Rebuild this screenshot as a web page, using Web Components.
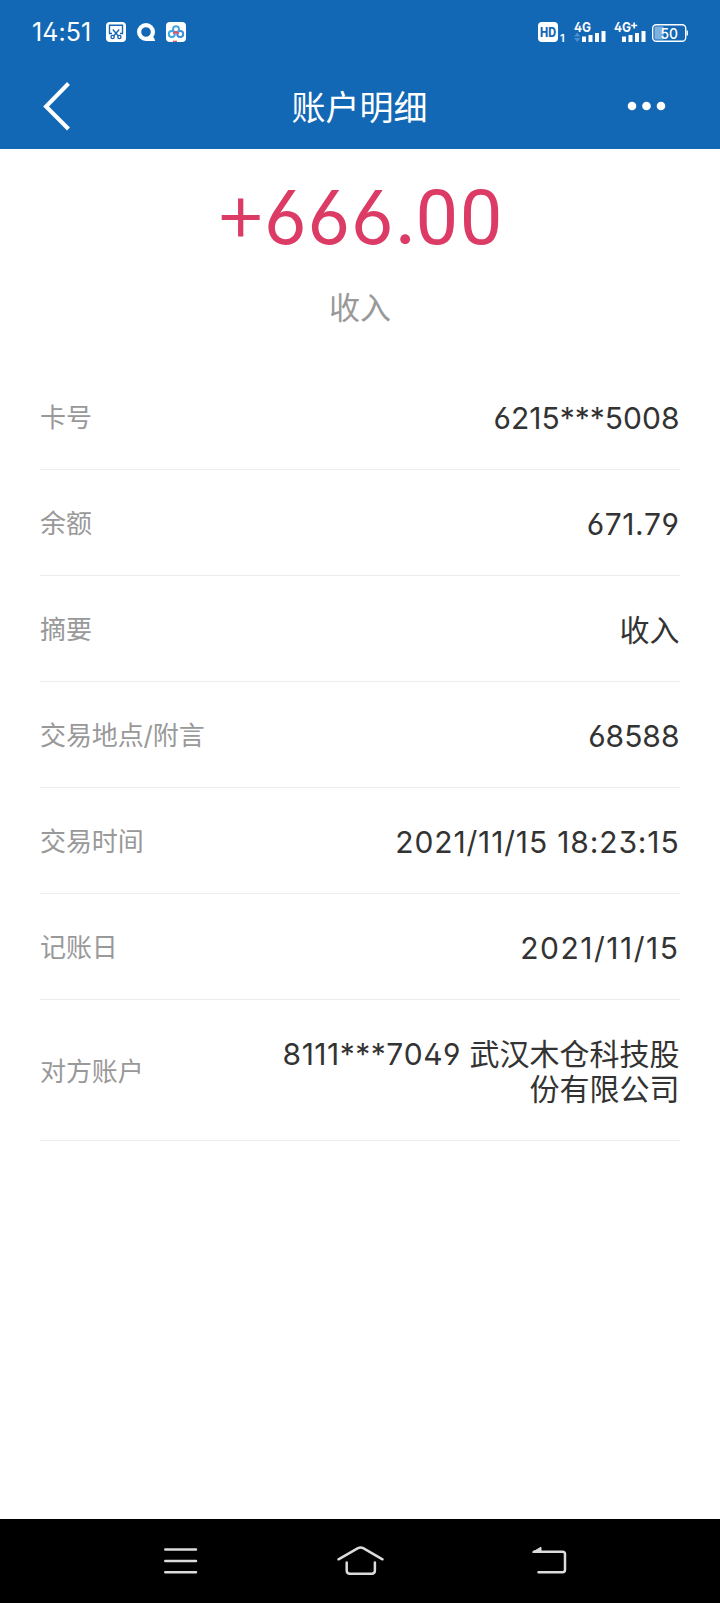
<!DOCTYPE html>
<html lang="zh-CN">
<head>
<meta charset="UTF-8">
<meta name="viewport" content="width=device-width, initial-scale=1">
<title>账户明细</title>
<style>
    html, body {
        margin: 0;
        background: #fff;
    }
    body {
        font-family: Inter, "Noto Sans CJK SC", sans-serif;
        font-feature-settings: "ss01";
    }
</style>
</head>
<body>
<account-page></account-page>

<script>
class StatusBar extends HTMLElement {
    constructor() {
        super();
        this.attachShadow({ mode: 'open' });
    }

    static get styles() {
        return /*css*/`
        :host{
            display:flex;
            justify-content:space-between;
            box-sizing:border-box;
            height:63px;
            padding:20px 32px 0 32px;
            color:#fff;
        }
        .left, .right{
            display:flex;
            align-items:flex-start;
        }
        .time{
            width:74px;
            font-size:25px;
            line-height:25px;
            letter-spacing:0.100px;
            white-space:nowrap;
        }
        svg{
            display:block;
        }
        text{
            font-family:Inter, sans-serif;
            fill:#fff;
        }
    `;
    }

    connectedCallback() {
        this.render();
    }

    render() {
        this.shadowRoot.innerHTML =/*html*/`
        <style>${StatusBar.styles}</style>
        <div class="left">
            <span class="time">14:51</span>
            <svg width="82" height="24" viewBox="106 20 82 24">
                <rect x="106" y="22" width="20" height="20" rx="4" fill="#fff"/>
                <g fill="none" stroke="#1568b4" stroke-width="1.4">
                    <path d="M112 33.500h-2.500v-8.300h13v8.300h-2.500"/>
                    <path d="M112.800 29.500l5.600 6.500M119.200 29.500l-5.600 6.500"/>
                    <circle cx="112.600" cy="37" r="1.600"/>
                    <circle cx="119.400" cy="37" r="1.600"/>
                </g>
                <circle cx="146" cy="32" r="6.900" fill="none" stroke="#fff" stroke-width="4.200"/>
                <path d="M146 41q1-5 4.500-5.500q3-.2 4.700 5.500z" fill="#fff"/>
                <rect x="166" y="22" width="20" height="20" rx="4" fill="#fff"/>
                <g fill="none" stroke-width="2">
                    <circle cx="171.800" cy="34" r="3" stroke="#3fa9e0"/>
                    <circle cx="180.200" cy="34" r="3" stroke="#3a8fd8"/>
                    <circle cx="176" cy="29.300" r="3" stroke="#49a5e2"/>
                    <path d="M173.500 34q2.500 -4 5 0" stroke="#e5516a"/>
                </g>
                <path d="M173 40.700h4v1.300h-4z" fill="#e5516a"/>
            </svg>
        </div>
        <div class="right">
            <svg width="150" height="24" viewBox="538 20 150 24">
                <rect x="538" y="22" width="20" height="20" rx="4" fill="#fff"/>
                <text x="540" y="36.700" font-size="12.500" font-weight="800" textLength="16" lengthAdjust="spacingAndGlyphs" style="fill:#1568b4">HD</text>
                <text x="560" y="42" font-size="11" font-weight="600">1</text>
                <text x="574" y="32" font-size="13" font-weight="700" textLength="17" lengthAdjust="spacingAndGlyphs">4G</text>
                <path d="M574 36.500l3.200-4 3.200 4zM574 38l3.200 4 3.200-4z" fill="#4a90cf"/>
                <path d="M582 36.500h4V42h-4zM588.500 35h4v7h-4zM595 33h4v9h-4zM601.500 31h4v11h-4z" fill="#fff"/>
                <text x="614" y="32" font-size="13" font-weight="700" textLength="17" lengthAdjust="spacingAndGlyphs">4G</text>
                <path d="M634.200 22.500v6M631.200 25.500h6" stroke="#fff" stroke-width="1.700"/>
                <path d="M622 36.500h4V42h-4zM628.500 35h4v7h-4zM635 33h4v9h-4zM641.500 31h4v11h-4z" fill="#fff"/>
                <rect x="654.500" y="26.500" width="9" height="13" fill="#7fb1de"/>
                <rect x="652.700" y="24.700" width="33" height="16.600" rx="3.500" fill="none" stroke="#fff" stroke-width="1.400"/>
                <path d="M686.500 30.500h1.400v5h-1.400z" fill="#fff"/>
                <text x="660.500" y="38.500" font-size="15" font-weight="500" textLength="17.500" lengthAdjust="spacingAndGlyphs">50</text>
            </svg>
        </div>
    `;
    }
}
customElements.define('status-bar', StatusBar);

class TitleBar extends HTMLElement {
    constructor() {
        super();
        this.attachShadow({ mode: 'open' });
    }

    static get styles() {
        return /*css*/`
        :host{
            display:grid;
            grid-template-columns:1fr auto 1fr;
            align-items:center;
            height:85.500px;
            padding:0 54px 0 42px;
            color:#fff;
        }
        h1{
            margin:4px 0 0 11px;
            font-size:34px;
            font-weight:400;
            line-height:40px;
        }
        svg{
            display:block;
        }
        .more{
            justify-self:end;
        }
    `;
    }

    connectedCallback() {
        this.render();
    }

    render() {
        this.shadowRoot.innerHTML =/*html*/`
        <style>${TitleBar.styles}</style>
        <svg width="30" height="50" viewBox="0 0 30 50">
            <path d="M26.500 2.500L4 25.500 26.500 48" fill="none" stroke="#fff" stroke-width="4"/>
        </svg>
        <h1><slot></slot></h1>
        <svg class="more" width="40" height="10" viewBox="0 0 40 10">
            <g fill="#fff">
                <circle cx="6" cy="5" r="4.300"/>
                <circle cx="20.500" cy="5" r="4.300"/>
                <circle cx="35" cy="5" r="4.300"/>
            </g>
        </svg>
    `;
    }
}
customElements.define('title-bar', TitleBar);

class AmountSummary extends HTMLElement {
    constructor() {
        super();
        this.attachShadow({ mode: 'open' });
    }

    static get styles() {
        return /*css*/`
        :host{
            display:flex;
            flex-direction:column;
            align-items:center;
            box-sizing:border-box;
            height:215px;
            padding-top:28px;
        }
        .amount{
            height:80px;
            margin-right:3px;
            color:#dc3b66;
            font-size:74px;
            line-height:80px;
            letter-spacing:0.500px;
            white-space:nowrap;
            font-kerning:none;
        }
        .sign{
            font-size:84px;
            font-weight:300;
            line-height:0;
            letter-spacing:-4px;
            vertical-align:3px;
        }
        .cents{
            margin-left:-1px;
            font-family:Roboto, sans-serif;
            font-size:76px;
            line-height:0;
            letter-spacing:1.500px;
        }
        .type{
            margin-top:31px;
            color:#999;
            font-size:31px;
            line-height:40px;
        }
    `;
    }

    connectedCallback() {
        this.render();
    }

    render() {
        const [whole, cents] = this.getAttribute('amount').split('.');
        this.shadowRoot.innerHTML =/*html*/`
        <style>${AmountSummary.styles}</style>
        <div class="amount"><span class="sign">${whole[0]}</span>${whole.slice(1)}.<span class="cents">${cents}</span></div>
        <div class="type"><slot></slot></div>
    `;
    }
}
customElements.define('amount-summary', AmountSummary);

class DetailRow extends HTMLElement {
    constructor() {
        super();
        this.attachShadow({ mode: 'open' });
    }

    static get styles() {
        return /*css*/`
        :host{
            display:flex;
            justify-content:space-between;
            align-items:center;
            box-sizing:border-box;
            min-height:106px;
            padding:37px 0 32.500px;
            border-bottom:1px solid #ececec;
        }
        .label{
            color:#999;
            font-size:26px;
            line-height:34px;
            letter-spacing:-0.100px;
            white-space:nowrap;
        }
        .value{
            max-width:410px;
            margin-right:0.500px;
            color:#333;
            font-size:30px;
            line-height:35.500px;
            text-align:right;
            font-kerning:none;
        }
        ::slotted(.number){
            letter-spacing:0.500px;
        }
        ::slotted(.date){
            letter-spacing:1.500px;
        }
        ::slotted(.datetime){
            letter-spacing:0.850px;
        }
    `;
    }

    connectedCallback() {
        this.render();
    }

    render() {
        this.shadowRoot.innerHTML =/*html*/`
        <style>${DetailRow.styles}</style>
        <span class="label">${this.getAttribute('label')}</span>
        <span class="value"><slot></slot></span>
    `;
    }
}
customElements.define('detail-row', DetailRow);

class SystemNav extends HTMLElement {
    constructor() {
        super();
        this.attachShadow({ mode: 'open' });
    }

    static get styles() {
        return /*css*/`
        :host{
            display:flex;
            justify-content:space-between;
            align-items:center;
            box-sizing:border-box;
            height:84px;
            padding:0 152px 0 162px;
            background:#000;
        }
        svg{
            display:block;
            fill:none;
            stroke:#dcdcdc;
            stroke-width:2.500;
            stroke-linecap:round;
            stroke-linejoin:round;
        }
    `;
    }

    connectedCallback() {
        this.render();
    }

    render() {
        this.shadowRoot.innerHTML =/*html*/`
        <style>${SystemNav.styles}</style>
        <svg width="38" height="34" viewBox="162 1544 38 34">
            <path d="M165.300 1549.500H196M165.300 1561H196M165.300 1572.200H196"/>
        </svg>
        <svg width="58" height="34" viewBox="336 1544 58 34">
            <path d="M338.500 1559.300L358 1548.200q2.600-1.400 5.200 0L382.500 1559.300"/>
            <path d="M346.700 1562.500v8q0 3.200 3.200 3.200h21.800q3.200 0 3.200-3.200v-8"/>
        </svg>
        <svg width="38" height="34" viewBox="530 1544 38 34">
            <path d="M534 1551.800H562.500q2.500 0 2.500 2.500v15.400q0 2.500-2.500 2.500H538.500"/>
            <path d="M532.800 1552l8.200-4.800v4.800z" fill="#dcdcdc" stroke-width="1"/>
        </svg>
    `;
    }
}
customElements.define('system-nav', SystemNav);

class AccountPage extends HTMLElement {
    constructor() {
        super();
        this.attachShadow({ mode: 'open' });
    }

    static get styles() {
        return /*css*/`
        :host{
            display:flex;
            flex-direction:column;
            width:720px;
            height:1603px;
            overflow:hidden;
        }
        header{
            background:#1368b5;
        }
        main{
            flex:1;
        }
        .details{
            padding:0 40px;
        }
    `;
    }

    connectedCallback() {
        this.render();
    }

    render() {
        this.shadowRoot.innerHTML =/*html*/`
        <style>${AccountPage.styles}</style>
        <header>
            <status-bar></status-bar>
            <title-bar>账户明细</title-bar>
        </header>
        <main>
            <amount-summary amount="+666.00">收入</amount-summary>
            <div class="details">
                <detail-row label="卡号">6215***5008</detail-row>
                <detail-row label="余额"><span class="number">671.79</span></detail-row>
                <detail-row label="摘要">收入</detail-row>
                <detail-row label="交易地点/附言">68588</detail-row>
                <detail-row label="交易时间"><span class="datetime">2021/11/15 18:23:15</span></detail-row>
                <detail-row label="记账日"><span class="date">2021/11/15</span></detail-row>
                <detail-row label="对方账户"><span class="number">8111***7049</span> 武汉木仓科技股份有限公司</detail-row>
            </div>
        </main>
        <system-nav></system-nav>
    `;
    }
}
customElements.define('account-page', AccountPage);
</script>
</body>
</html>
